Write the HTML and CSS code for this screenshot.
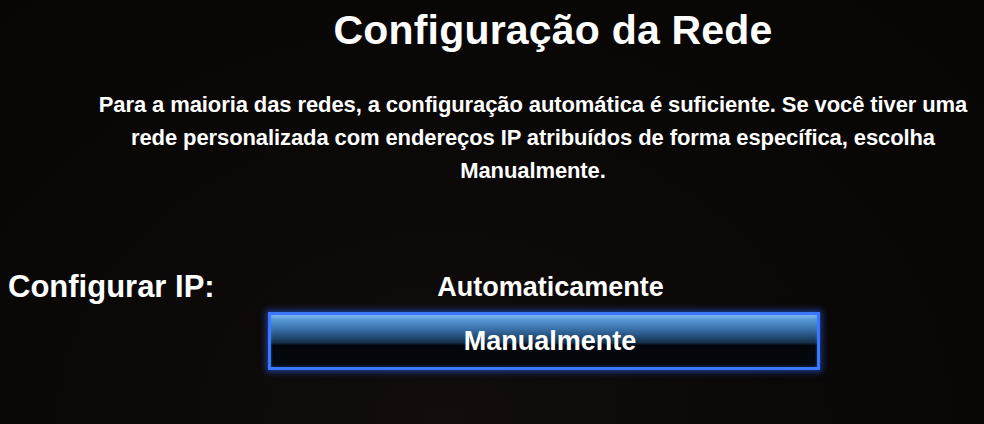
FILE: index.html
```html
<!DOCTYPE html>
<html lang="pt">
<head>
<meta charset="utf-8">
<link rel="stylesheet" href="styles.css">
</head>
<body>
<div class="screen">
  <h1 class="title">Configuração da Rede</h1>
  <p class="desc">Para a maioria das redes, a configuração automática é suficiente. Se você tiver uma<br>rede personalizada com endereços IP atribuídos de forma específica, escolha<br>Manualmente.</p>
  <div class="setting">
    <div class="label">Configurar IP:</div>
    <div class="options">
      <div class="option">Automaticamente</div>
      <div class="option selected">Manualmente</div>
    </div>
  </div>
</div>
</body>
</html>
```

FILE: styles.css
```css
html, body {
  margin: 0;
  padding: 0;
  background: #0a0707;
}
body {
  width: 984px;
  height: 424px;
  overflow: hidden;
  font-family: "Liberation Sans", Arial, sans-serif;
  color: #fff;
  background: radial-gradient(ellipse at 45% 100%, #130d0d 0%, #0a0707 55%, #080505 100%);
}
.screen {
  display: flex;
  flex-direction: column;
  height: 424px;
}
.title {
  margin: 6px 0 0 0;
  padding-left: 122px;
  text-align: center;
  font-size: 41px;
  font-weight: bold;
  line-height: 48px;
  letter-spacing: 0.2px;
}
.desc {
  margin: 34px 0 0 0;
  padding-left: 82px;
  text-align: center;
  font-size: 22px;
  font-weight: bold;
  line-height: 33px;
  letter-spacing: -0.1px;
}
.setting {
  display: flex;
  margin-top: 82px;
}
.label {
  width: 260px;
  padding-left: 8px;
  font-size: 31px;
  font-weight: bold;
  line-height: 36px;
}
.options {
  display: flex;
  flex-direction: column;
  width: 552px;
}
.option {
  padding-left: 13px;
  text-align: center;
  font-size: 27px;
  font-weight: bold;
  line-height: 36px;
  height: 36px;
}
.selected {
  margin-top: 7px;
  padding-left: 12px;
  height: 52px;
  line-height: 52px;
  border: 3px solid #3a78ff;
  box-shadow: 0 0 6px 2px rgba(40, 100, 255, 0.55), inset 0 0 3px rgba(60, 120, 255, 0.6);
  background: linear-gradient(to bottom, #8fc0ee 0%, #5a9ad6 8%, #3c76b0 25%, #244d78 42%, #142c44 54%, #03060a 58%, #04070c 100%);
}
```
